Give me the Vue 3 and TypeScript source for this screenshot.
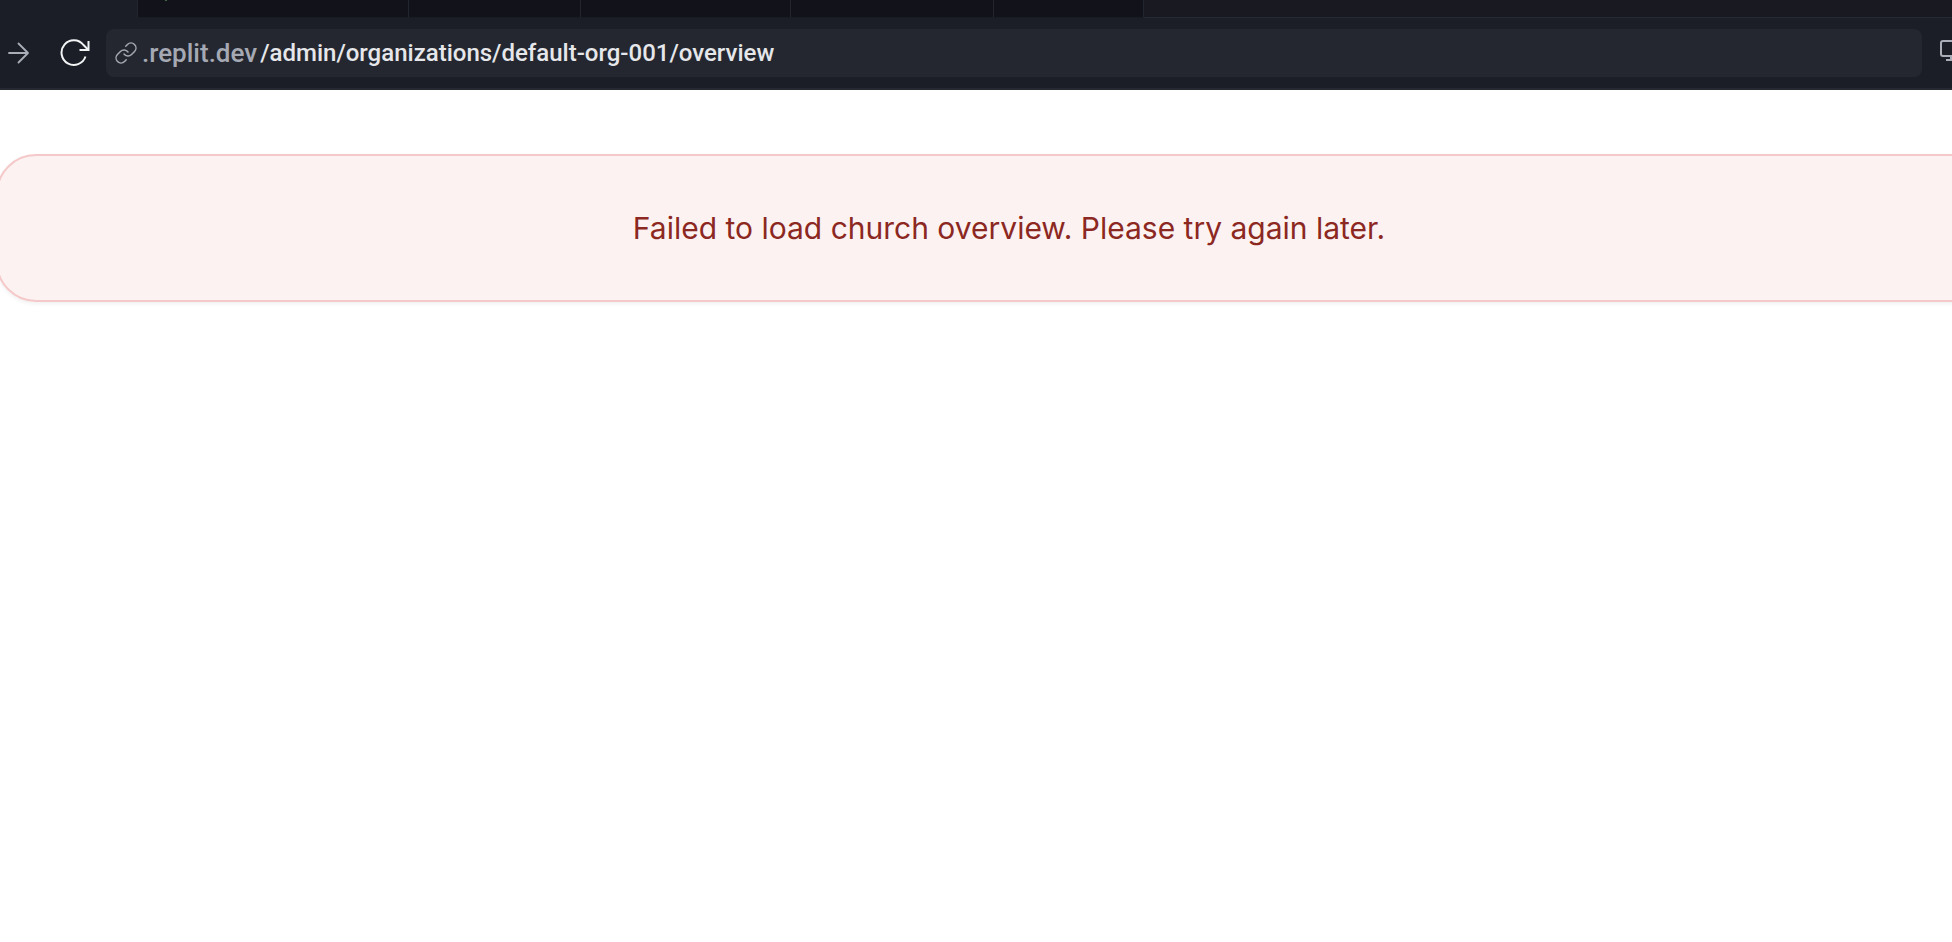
<script setup lang="ts">
import { ref } from 'vue'

interface Tab {
  id: number
  size: string
  marked?: boolean
}

const tabs: Tab[] = [
  { id: 1, size: 'active' },
  { id: 2, size: 'widest', marked: true },
  { id: 3, size: 'medium' },
  { id: 4, size: 'wide' },
  { id: 5, size: 'regular' },
  { id: 6, size: 'narrow' },
]

const host = '.replit.dev'
const path = ref('/admin/organizations/default-org-001/overview')
const message = 'Failed to load church overview. Please try again later.'
</script>

<template>
  <div class="page">
    <header class="chrome">
      <div class="tabs">
        <button
          v-for="tab in tabs"
          :key="tab.id"
          type="button"
          class="tab"
          :class="tab.size"
          :aria-label="`Tab ${tab.id}`"
        >
          <span v-if="tab.marked" class="mark"></span>
        </button>
        <div class="rest"></div>
      </div>

      <form class="toolbar" @submit.prevent>
        <button type="button" class="tool forward" aria-label="Forward">
          <svg width="22" height="22" viewBox="0 0 22 22" fill="none" stroke="currentColor" stroke-width="1.8" stroke-linecap="round" stroke-linejoin="round">
            <path d="M1 11H20M10.500 1.500L20 11L10.500 20.500" />
          </svg>
        </button>
        <button type="button" class="tool reload" aria-label="Reload">
          <svg width="30" height="28" viewBox="0 0 30 28" fill="none" stroke="currentColor" stroke-width="2">
            <path d="M25.500 17.500A12.300 12.300 0 1 1 23.500 6L28 10.500" />
            <path d="M28.500 2V11H19.500" />
          </svg>
        </button>
        <div class="address">
          <label for="path" class="host">
            <svg width="22" height="22" viewBox="1 1 22 22" fill="none" stroke="currentColor" stroke-width="1.5" stroke-linecap="round">
              <path d="M10 13a5 5 0 0 0 7.540.54l3-3a5 5 0 0 0-7.070-7.070l-1.720 1.710" />
              <path d="M14 11a5 5 0 0 0-7.540-.54l-3 3a5 5 0 0 0 7.070 7.070l1.710-1.710" />
            </svg>
            <span>{{ host }}</span>
          </label>
          <input id="path" v-model="path" type="text" class="path" spellcheck="false" />
        </div>
        <button type="button" class="tool device" aria-label="Devices">
          <svg width="28" height="22" viewBox="0 0 28 22" fill="none" stroke="currentColor" stroke-width="2">
            <rect x="1" y="1" width="24" height="15" rx="2" />
            <path d="M11 16V20M6 20H20" />
          </svg>
        </button>
      </form>
    </header>

    <main class="content">
      <section class="alert" role="alert">
        <p>{{ message }}</p>
      </section>
    </main>
  </div>
</template>

<style>
body {
  margin: 0;
  background: #ffffff;
}
</style>

<style scoped>
.page {
  overflow: hidden;
  font-family: Inter, 'Liberation Sans', sans-serif;
}

.chrome {
  background: #1b1e26;
  border-bottom: 2px solid #262932;
}

.tabs {
  display: flex;
  height: 18px;
}

.tab {
  flex: none;
  box-sizing: border-box;
  display: flex;
  align-items: flex-start;
  margin: 0;
  padding: 0 0 0 27px;
  border: 0;
  border-right: 1px solid #22252e;
  border-bottom: 1px solid #1a1c24;
  border-radius: 0;
  background: #11121a;
}

.active {
  width: 138px;
  background: #1b1e26;
  border-bottom-color: #1b1e26;
}

.widest {
  width: 271px;
}

.medium {
  width: 172px;
}

.wide {
  width: 210px;
}

.regular {
  width: 203px;
}

.narrow {
  width: 150px;
}

.mark {
  width: 2px;
  height: 1px;
  background: #3f6a45;
}

.rest {
  flex: 1;
  background: #191921;
  border-bottom: 1px solid #262a33;
}

.toolbar {
  display: flex;
  align-items: center;
  height: 70px;
  margin: 0;
}

.tool {
  flex: none;
  display: flex;
  margin: 0;
  padding: 0;
  border: 0;
  background: none;
}

.tool svg {
  flex: none;
}

.forward {
  margin-left: 8px;
  color: #a9adb8;
}

.reload {
  margin-left: 30px;
  color: #f2f3f5;
}

.address {
  flex: 1;
  display: flex;
  align-items: center;
  gap: 3px;
  box-sizing: border-box;
  height: 48px;
  margin-left: 16px;
  padding: 0 9px;
  border-radius: 8px;
  background: #24272f;
  font: 500 24px/32px Roboto, 'Liberation Sans', sans-serif;
}

.host {
  display: flex;
  align-items: center;
  gap: 5px;
  color: #a5a9b4;
  font-size: 26px;
}

.path {
  flex: 1;
  min-width: 0;
  margin: 0;
  padding: 0;
  border: 0;
  outline: 0;
  background: none;
  color: #e6e7eb;
  font: inherit;
}

.device {
  width: 12px;
  margin-left: 18px;
  padding-bottom: 4px;
  overflow: hidden;
  color: #a9adb8;
}

.content {
  padding-top: 64px;
}

.alert {
  margin: 0 -70px 16px -4px;
  padding: 52px;
  border: 2px solid #f5c9c9;
  border-radius: 40px;
  background: #fcf2f1;
  box-shadow: 0 2px 4px rgba(0, 0, 0, 0.06);
  text-align: center;
}

.alert p {
  margin: 0;
  color: #8c2822;
  font-size: 30px;
  line-height: 40px;
}
</style>
